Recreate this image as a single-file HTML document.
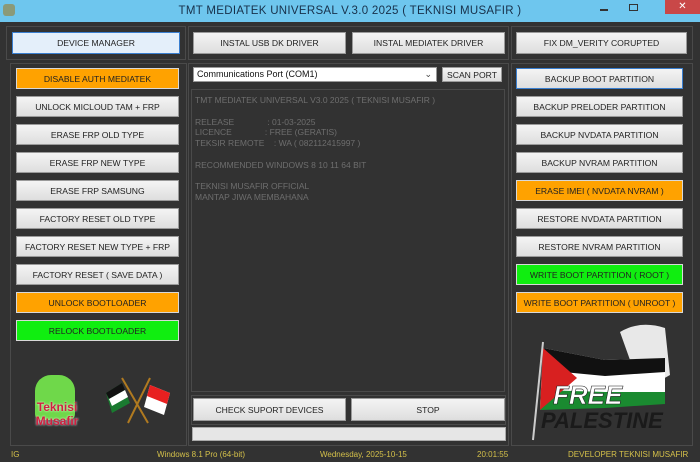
<!DOCTYPE html>
<html><head><style>
*{margin:0;padding:0;box-sizing:border-box}
body{width:700px;height:462px;background:#323232;font-family:"Liberation Sans",sans-serif;position:relative;overflow:hidden}
.a{position:absolute}
.title{left:0;top:0;width:700px;height:22px;background:#6ec6ee;color:#17304a;font-size:11.5px;text-align:center;line-height:22px;letter-spacing:.3px}
.panel{position:absolute;border:1px solid #4a4a4a;}
.b{position:absolute;background:linear-gradient(#f4f4f4,#dedede);border:1px solid #9a9a9a;color:#222;font-size:8.6px;text-align:center;display:flex;align-items:center;justify-content:center;white-space:nowrap}
.o{background:#ffa200;border-color:#d8d8d8}
.g{background:#10ee10;border-color:#d8d8d8}
.sel{border:1px solid #3a7fd0;background:#e4effa}
.st{position:absolute;top:450px;font-size:8px;color:#d4c04a}
.txt{color:#6e6e6e;font-size:8.5px;line-height:10.8px;white-space:pre}
</style></head><body>
<div class="a title">TMT MEDIATEK UNIVERSAL V.3.0 2025 ( TEKNISI MUSAFIR )</div>
<div class="a" style="left:3px;top:4px;width:12px;height:12px;background:#8a9a7a;border-radius:3px"></div>
<div class="a" style="left:600px;top:9px;width:8px;height:2px;background:#333"></div>
<div class="a" style="left:629px;top:4px;width:9px;height:7px;border:1px solid #333"></div>
<div class="a" style="left:665px;top:0;width:35px;height:14px;background:#c94848;color:#fff;font-size:10px;text-align:center;line-height:14px">✕</div>

<div class="panel" style="left:6px;top:26px;width:180px;height:34px"></div>
<div class="panel" style="left:188px;top:26px;width:321px;height:34px"></div>
<div class="panel" style="left:511px;top:26px;width:182px;height:34px"></div>
<div class="b sel" style="left:12px;top:32px;width:168px;height:22px">DEVICE MANAGER</div>
<div class="b" style="left:193px;top:32px;width:153px;height:22px">INSTAL USB DK DRIVER</div>
<div class="b" style="left:352px;top:32px;width:153px;height:22px">INSTAL MEDIATEK DRIVER</div>
<div class="b" style="left:516px;top:32px;width:171px;height:22px">FIX DM_VERITY CORUPTED</div>

<div class="panel" style="left:10px;top:63px;width:177px;height:383px"></div>
<div class="panel" style="left:188px;top:63px;width:321px;height:383px"></div>
<div class="panel" style="left:511px;top:63px;width:182px;height:383px"></div>

<div class="b o" style="left:16px;top:68px;width:163px;height:21px">DISABLE AUTH MEDIATEK</div>
<div class="b" style="left:16px;top:96px;width:163px;height:21px">UNLOCK MICLOUD TAM + FRP</div>
<div class="b" style="left:16px;top:124px;width:163px;height:21px">ERASE FRP OLD TYPE</div>
<div class="b" style="left:16px;top:152px;width:163px;height:21px">ERASE FRP NEW TYPE</div>
<div class="b" style="left:16px;top:180px;width:163px;height:21px">ERASE FRP SAMSUNG</div>
<div class="b" style="left:16px;top:208px;width:163px;height:21px">FACTORY RESET OLD TYPE</div>
<div class="b" style="left:16px;top:236px;width:163px;height:21px">FACTORY RESET NEW TYPE + FRP</div>
<div class="b" style="left:16px;top:264px;width:163px;height:21px">FACTORY RESET ( SAVE DATA )</div>
<div class="b o" style="left:16px;top:292px;width:163px;height:21px">UNLOCK BOOTLOADER</div>
<div class="b g" style="left:16px;top:320px;width:163px;height:21px">RELOCK BOOTLOADER</div>

<div class="b sel" style="left:516px;top:68px;width:167px;height:21px;background:linear-gradient(#f4f4f4,#dedede)">BACKUP BOOT PARTITION</div>
<div class="b" style="left:516px;top:96px;width:167px;height:21px">BACKUP PRELODER PARTITION</div>
<div class="b" style="left:516px;top:124px;width:167px;height:21px">BACKUP NVDATA PARTITION</div>
<div class="b" style="left:516px;top:152px;width:167px;height:21px">BACKUP NVRAM PARTITION</div>
<div class="b o" style="left:516px;top:180px;width:167px;height:21px">ERASE IMEI ( NVDATA NVRAM )</div>
<div class="b" style="left:516px;top:208px;width:167px;height:21px">RESTORE NVDATA PARTITION</div>
<div class="b" style="left:516px;top:236px;width:167px;height:21px">RESTORE NVRAM PARTITION</div>
<div class="b g" style="left:516px;top:264px;width:167px;height:21px">WRITE BOOT PARTITION ( ROOT )</div>
<div class="b o" style="left:516px;top:292px;width:167px;height:21px">WRITE BOOT PARTITION ( UNROOT )</div>

<div class="a" style="left:193px;top:67px;width:244px;height:15px;background:#fff;border:1px solid #999;font-size:9px;line-height:13px;padding-left:3px;color:#111">Communications Port (COM1)<span style="position:absolute;right:4px;color:#444">⌄</span></div>
<div class="b" style="left:442px;top:67px;width:60px;height:15px">SCAN PORT</div>
<div class="a" style="left:191px;top:89px;width:314px;height:303px;border:1px solid #4a4a4a;padding:5px 3px">
<div class="txt">TMT MEDIATEK UNIVERSAL V3.0 2025 ( TEKNISI MUSAFIR )

RELEASE              : 01-03-2025
LICENCE              : FREE (GERATIS)
TEKSIR REMOTE    : WA ( 082112415997 )

RECOMMENDED WINDOWS 8 10 11 64 BIT

TEKNISI MUSAFIR OFFICIAL
MANTAP JIWA MEMBAHANA</div></div>
<div class="panel" style="left:191px;top:395px;width:315px;height:30px"></div>
<div class="b" style="left:193px;top:398px;width:153px;height:23px">CHECK SUPORT DEVICES</div>
<div class="b" style="left:351px;top:398px;width:154px;height:23px">STOP</div>
<div class="a" style="left:192px;top:427px;width:314px;height:14px;background:#e6e6e6;border:1px solid #aaa"></div>

<div class="a" style="left:35px;top:375px;width:40px;height:45px;background:#6fd84a;border-radius:16px 16px 6px 6px"></div>
<div class="a" style="left:29px;top:400px;width:56px;height:30px;color:#d02040;font-weight:bold;font-size:12px;text-align:center;line-height:14px;text-shadow:0 0 2px #fff">Teknisi<br>Musafir</div>
<svg class="a" style="left:100px;top:375px" width="80" height="50"><line x1="22" y1="3" x2="48" y2="48" stroke="#b07a20" stroke-width="2"/><line x1="50" y1="3" x2="28" y2="48" stroke="#b07a20" stroke-width="2"/><path d="M6 18 L22 8 L30 28 L12 38Z" fill="#1a7a30"/><path d="M6 18 L22 8 L25 15 L9 24Z" fill="#111"/><path d="M9 24 L25 15 L28 22 L12 31Z" fill="#fff"/><path d="M50 10 L70 18 L64 40 L44 32Z" fill="#fff"/><path d="M50 10 L70 18 L67 29 L47 21Z" fill="#e82020"/></svg>
<svg class="a" style="left:515px;top:320px" width="180" height="125"><path d="M105 12 Q125 0 150 8 L155 55 L128 70 L115 40Z" fill="#e8e8e8"/><path d="M28 28 L90 40 L150 38 L150 80 L90 85 L25 88Z" fill="#fff"/><path d="M28 28 L90 40 L150 38 L150 52 L90 56 L27 50Z" fill="#111"/><path d="M26 70 L90 72 L150 72 L150 84 L90 88 L25 90Z" fill="#1a8a30"/><path d="M28 28 L62 58 L25 90Z" fill="#d82020"/><line x1="28" y1="22" x2="18" y2="120" stroke="#ccc" stroke-width="2"/>
<text x="38" y="84" font-family="Liberation Sans" font-weight="bold" font-style="italic" font-size="26" fill="#fff" stroke="#222" stroke-width=".6">FREE</text>
<text x="26" y="108" font-family="Liberation Sans" font-weight="bold" font-style="italic" font-size="22" fill="#1a1a1a">PALESTINE</text></svg>

<div class="st" style="left:11px">IG</div>
<div class="st" style="left:157px">Windows 8.1 Pro (64-bit)</div>
<div class="st" style="left:320px">Wednesday, 2025-10-15</div>
<div class="st" style="left:477px">20:01:55</div>
<div class="st" style="left:568px">DEVELOPER TEKNISI MUSAFIR</div>
</body></html>
